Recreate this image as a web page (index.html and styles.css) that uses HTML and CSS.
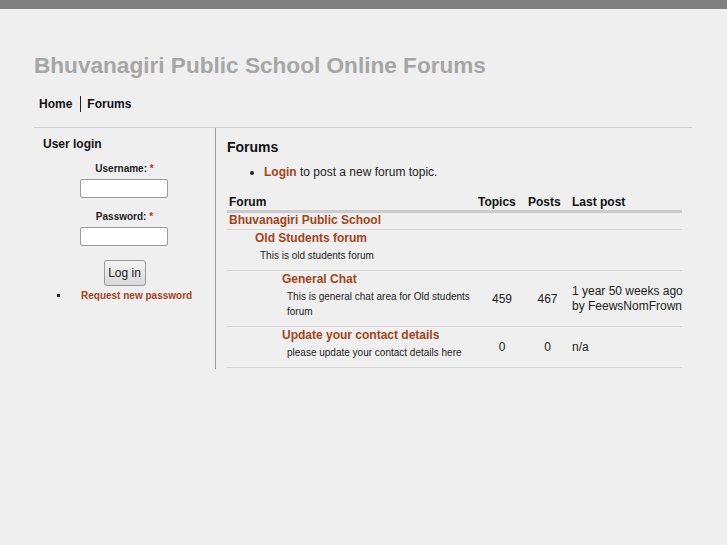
FILE: index.html
```html
<!DOCTYPE html>
<html>
<head>
<meta charset="utf-8">
<link rel="stylesheet" href="styles.css">
</head>
<body>
<div class="topbar"></div>
<div class="page">
  <h1 class="site-title">Bhuvanagiri Public School Online Forums</h1>
  <ul class="nav">
    <li class="nav-item first">Home</li>
    <li class="nav-item">Forums</li>
  </ul>
  <div class="layout">
    <aside class="sidebar">
      <h2 class="block-title">User login</h2>
      <form class="login">
        <label class="field-label">Username: <span class="req">*</span></label>
        <input class="text-input" type="text">
        <label class="field-label pw">Password: <span class="req">*</span></label>
        <input class="text-input" type="password">
        <button class="btn" type="button">Log in</button>
      </form>
      <ul class="links">
        <li><a class="link small" href="#">Request new password</a></li>
      </ul>
    </aside>
    <main class="main">
      <h2 class="page-title">Forums</h2>
      <ul class="actions">
        <li><a class="link" href="#">Login</a> to post a new forum topic.</li>
      </ul>
      <table class="forums">
        <colgroup>
          <col class="w-forum">
          <col class="w-topics">
          <col class="w-posts">
          <col class="w-last">
        </colgroup>
        <thead>
          <tr>
            <th class="c-forum">Forum</th>
            <th class="c-topics">Topics</th>
            <th class="c-posts">Posts</th>
            <th class="c-last">Last post</th>
          </tr>
        </thead>
        <tbody>
          <tr class="row-cat">
            <td colspan="4"><a class="link" href="#">Bhuvanagiri Public School</a></td>
          </tr>
          <tr class="row-sub">
            <td colspan="4" class="lvl1">
              <a class="link" href="#">Old Students forum</a>
              <div class="desc">This is old students forum</div>
            </td>
          </tr>
          <tr class="row-forum">
            <td class="lvl2">
              <a class="link" href="#">General Chat</a>
              <div class="desc">This is general chat area for Old students forum</div>
            </td>
            <td class="num topics">459</td>
            <td class="num posts">467</td>
            <td class="last">1 year 50 weeks ago<br>by FeewsNomFrown</td>
          </tr>
          <tr class="row-forum">
            <td class="lvl2">
              <a class="link" href="#">Update your contact details</a>
              <div class="desc">please update your contact details here</div>
            </td>
            <td class="num topics">0</td>
            <td class="num posts">0</td>
            <td class="last">n/a</td>
          </tr>
        </tbody>
      </table>
    </main>
  </div>
</div>
</body>
</html>
```
FILE: styles.css
```css
html, body {
  margin: 0;
  padding: 0;
  background: #efefef;
  font-family: "Liberation Sans", Arial, sans-serif;
  color: #222;
}
.topbar {
  height: 9px;
  background: #808080;
}
.page {
  margin: 0 35px 0 34px;
}
.site-title {
  margin: 44px 0 0 0;
  font-size: 22.6px;
  line-height: 26px;
  font-weight: bold;
  color: #a6a6a6;
}
.nav {
  list-style: none;
  margin: 17px 0 0 0;
  padding: 0 0 0 5px;
  display: flex;
  height: 16px;
  align-items: center;
}
.nav-item {
  font-size: 12px;
  font-weight: bold;
  color: #111;
  line-height: 16px;
}
.nav-item.first {
  padding-right: 8px;
  border-right: 1px solid #222;
  margin-right: 6px;
}
.layout {
  display: flex;
  margin-top: 15px;
  border-top: 1px solid #cfcfcf;
}
.sidebar {
  width: 182px;
  border-right: 1px solid #9a9a9a;
  padding: 9px 0 0 0;
  box-sizing: border-box;
  min-height: 241px;
}
.block-title {
  margin: 0 0 0 9px;
  font-size: 12px;
  line-height: 15px;
  font-weight: bold;
  color: #111;
}
.login {
  display: flex;
  flex-direction: column;
  align-items: center;
  margin-top: 11px;
}
.field-label {
  font-size: 10px;
  font-weight: bold;
  color: #222;
  line-height: 12px;
}
.field-label.pw {
  margin-top: 13px;
}
.req {
  color: #e02020;
}
.text-input {
  margin-top: 4px;
  margin-right: 2px;
  width: 88px;
  height: 19px;
  box-sizing: border-box;
  border: 1px solid #9a9a9a;
  border-radius: 2px;
  background: #fff;
  padding: 0;
}
.btn {
  margin-top: 14px;
  width: 42px;
  height: 26px;
  font-family: "Liberation Sans", Arial, sans-serif;
  font-size: 12px;
  color: #222;
  background: linear-gradient(#f4f4f4, #d8d8d8);
  border: 1px solid #9a9a9a;
  border-radius: 3px;
  padding: 0;
}
.links {
  margin: 3px 0 0 0;
  padding: 0 0 0 36px;
  list-style: square;
  font-size: 10px;
  line-height: 14px;
}
.links li {
  padding-left: 11px;
}
.link {
  color: #a4441a;
  font-weight: bold;
  text-decoration: none;
}
.link.small {
  font-size: 10px;
}
.main {
  flex: 1;
  padding: 10px 10px 0 11px;
}
.page-title {
  margin: 0;
  font-size: 14px;
  line-height: 18px;
  font-weight: bold;
  color: #111;
}
.actions {
  margin: 8px 0 0 0;
  padding: 0 0 0 37px;
  font-size: 12px;
  line-height: 16px;
  color: #222;
}
.forums {
  margin-top: 14px;
  width: 455px;
  table-layout: fixed;
  border-collapse: collapse;
  font-size: 12px;
}
.w-forum { width: 245px; }
.w-topics { width: 50px; }
.w-posts { width: 44px; }
.w-last { width: 116px; }
.forums th {
  text-align: left;
  font-weight: bold;
  color: #111;
  padding: 1px 2px 1px 2px;
  border-bottom: 3px solid #cbcbcb;
  line-height: 14px;
}
.forums th.c-topics,
.forums th.c-posts,
.forums th.c-last {
  padding-left: 6px;
  padding-right: 0;
}
.forums td {
  padding: 1px 2px 7px 2px;
  border-bottom: 1px solid #d6d6d6;
  vertical-align: middle;
  line-height: 14px;
}
.forums .row-cat td {
  padding: 0 2px 2px 2px;
}
.forums td.lvl1 {
  padding-left: 28px;
}
.forums td.lvl2 {
  padding-left: 55px;
}
.desc {
  margin: 3px 0 0 5px;
  font-size: 10px;
  line-height: 15px;
  color: #222;
}
.forums td.num {
  text-align: center;
  color: #222;
  padding-right: 0;
  padding-bottom: 1px;
}
.forums td.topics {
  padding-left: 10px;
}
.forums td.posts {
  padding-left: 7px;
}
.forums td.last {
  padding: 1px 0 1px 6px;
  color: #222;
  line-height: 15px;
  white-space: nowrap;
}
```
